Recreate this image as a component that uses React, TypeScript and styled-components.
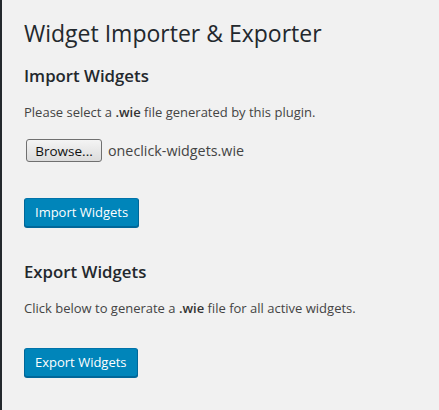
import React from "react";
import styled, { createGlobalStyle } from "styled-components";

const Global = createGlobalStyle`
  html, body { margin: 0; padding: 0; background: #f1f1f1; }
  body { font-family: "Open Sans", "Noto Sans", sans-serif; color: #444; }
`;

const Page = styled.div`
  min-height: 410px;
  box-sizing: border-box;
  border-left: 2px solid #23282d;
  padding: 15px 20px 0 22px;
`;

const Title = styled.h1`
  margin: 0;
  font-size: 23px;
  font-weight: 400;
  line-height: 36px;
  color: #23282d;
`;

const SectionTitle = styled.h2<{ $top: number }>`
  margin: ${(p) => p.$top}px 0 0;
  font-size: 16.8px;
  font-weight: 600;
  line-height: 24px;
  color: #23282d;
`;

const Text = styled.p`
  margin: 14px 0 0;
  font-size: 13px;
  line-height: 20px;
  color: #444;
  b { font-weight: 600; color: #333; }
`;

const FileRow = styled.div`
  display: flex;
  align-items: center;
  gap: 6px;
  margin: 17px 0 0 2px;
`;

const BrowseButton = styled.button`
  box-sizing: border-box;
  width: 76px;
  height: 23px;
  padding: 0;
  font-family: "Open Sans", "Noto Sans", sans-serif;
  font-size: 13.5px;
  color: #111;
  background: linear-gradient(#f4f4f4, #dcdcdc);
  border: 1px solid #707070;
  border-radius: 3px;
`;

const FileName = styled.span`
  font-size: 14.3px;
  color: #444;
`;

const PrimaryButton = styled.button<{ $top: number }>`
  box-sizing: border-box;
  display: block;
  height: 29px;
  padding: 0 10px 1px;
  margin-top: ${(p) => p.$top}px;
  font-family: "Open Sans", "Noto Sans", sans-serif;
  font-size: 13px;
  color: #fff;
  background: #0085ba;
  border: 1px solid #0073aa;
  border-color: #0073aa #006799 #006799;
  border-radius: 3px;
  box-shadow: 0 1px 0 #006799;
`;

export default function App() {
  return (
    <>
      <Global />
      <Page>
        <Title>Widget Importer &amp; Exporter</Title>
        <SectionTitle $top={13}>Import Widgets</SectionTitle>
        <Text>
          Please select a <b>.wie</b> file generated by this plugin.
        </Text>
        <FileRow>
          <BrowseButton>Browse...</BrowseButton>
          <FileName>oneclick-widgets.wie</FileName>
        </FileRow>
        <PrimaryButton $top={36}>Import Widgets</PrimaryButton>
        <SectionTitle $top={33}>Export Widgets</SectionTitle>
        <Text>
          Click below to generate a <b>.wie</b> file for all active widgets.
        </Text>
        <PrimaryButton $top={30}>Export Widgets</PrimaryButton>
      </Page>
    </>
  );
}
